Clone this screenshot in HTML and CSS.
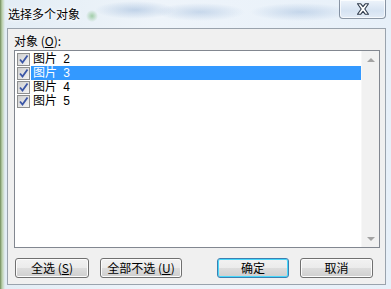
FILE: index.html
```html
<!DOCTYPE html>
<html lang="zh-CN">
<head>
  <meta charset="UTF-8">
  <title>选择多个对象</title>
  <link rel="stylesheet" href="styles.css">
</head>
<body>
  <div class="window">
    <div class="titlebar">
      <span class="title">选择多个对象</span>
      <button class="close-button">
        <svg width="14" height="12" viewBox="0 0 14 12">
          <path d="M1.5 0.8 H4.8 L7 3.6 L9.2 0.8 H12.5 L8.8 6 L12.5 11.2 H9.2 L7 8.4 L4.8 11.2 H1.5 L5.2 6 Z" fill="#fff" stroke="#2f3b4c" stroke-width="1.1" stroke-linejoin="round"/>
        </svg>
      </button>
    </div>

    <div class="client">
      <div class="field-label">对象 (<u>O</u>):</div>

      <div class="listbox">
        <ul class="items">
          <li class="item">
            <span class="check"></span>
            <span class="item-text">图片 2</span>
          </li>
          <li class="item selected">
            <span class="check"></span>
            <span class="item-text">图片 3</span>
          </li>
          <li class="item">
            <span class="check"></span>
            <span class="item-text">图片 4</span>
          </li>
          <li class="item">
            <span class="check"></span>
            <span class="item-text">图片 5</span>
          </li>
        </ul>
        <div class="scrollbar">
          <span class="arrow arrow-up"></span>
          <span class="arrow arrow-down"></span>
        </div>
      </div>

      <div class="buttons">
        <div class="button-group">
          <button class="btn btn-all">全选 (<u>S</u>)</button>
          <button class="btn btn-none">全部不选 (<u>U</u>)</button>
        </div>
        <div class="button-group">
          <button class="btn btn-ok default">确定</button>
          <button class="btn btn-cancel">取消</button>
        </div>
      </div>
    </div>
  </div>
</body>
</html>
```

FILE: styles.css
```css
body {
  margin: 0;
  padding: 0;
  font-family: "Noto Sans CJK SC", "Liberation Sans", sans-serif;
  font-size: 12px;
  color: #000;
}

.window {
  width: 391px;
  height: 289px;
  box-sizing: border-box;
  display: flex;
  flex-direction: column;
  background:
    radial-gradient(ellipse 40px 9px at 135px 10px, rgba(110, 150, 200, 0.35), transparent),
    radial-gradient(ellipse 45px 9px at 200px 12px, rgba(110, 150, 200, 0.3), transparent),
    radial-gradient(ellipse 50px 9px at 300px 12px, rgba(110, 150, 200, 0.3), transparent),
    radial-gradient(ellipse 6px 6px at 92px 16px, rgba(90, 170, 90, 0.5), transparent),
    linear-gradient(to right, #6f8a5a 0, #b9cfa9 2px, #e3edf5 5px, #eef4fa 40%, #e7f0f9 100%);
}

.titlebar {
  height: 28px;
  display: flex;
  justify-content: space-between;
  align-items: flex-start;
}

.title {
  padding: 6px 0 0 8px;
  line-height: 16px;
  text-shadow: 0 0 6px #fff, 0 0 3px #fff;
}

.close-button {
  width: 47px;
  height: 19px;
  margin: 0 5px 0 0;
  padding: 0;
  border: 1px solid rgba(60, 75, 95, 0.55);
  border-top: none;
  border-radius: 0 0 4px 4px;
  background: linear-gradient(#eef4fb, #d6e3f2 60%, #e3ecf7);
  box-shadow: inset 0 0 0 1px rgba(255, 255, 255, 0.7);
  display: flex;
  align-items: center;
  justify-content: center;
}

.client {
  margin: 0 5px 4px 7px;
  height: 257px;
  box-sizing: border-box;
  border: 1px solid #9aa3ad;
  background: #f0f0f0;
  padding: 0 5px 6px 6px;
  display: flex;
  flex-direction: column;
}

.field-label {
  padding-top: 4px;
  line-height: 15px;
  height: 15px;
  margin-bottom: 2px;
}

.listbox {
  height: 199px;
  box-sizing: border-box;
  border: 1px solid #828790;
  background: #fff;
  display: flex;
}

.items {
  flex-grow: 1;
  list-style: none;
  margin: 0;
  padding: 1px 0 0 0;
  font-family: "Liberation Sans", "Noto Sans CJK SC", sans-serif;
}

.item {
  height: 14px;
  display: flex;
  align-items: center;
}

.check {
  width: 11px;
  height: 11px;
  margin-left: 2px;
  border: 1px solid #8e8f8f;
  background:
    url("data:image/svg+xml;utf8,<svg xmlns='http://www.w3.org/2000/svg' width='11' height='11'><path d='M2 5.5 L4.5 8.5 L9.5 1.5' fill='none' stroke='%233b56a6' stroke-width='1.8'/></svg>") center no-repeat,
    linear-gradient(135deg, #cfcfcf, #f4f4f4);
  flex-shrink: 0;
}

.item-text {
  flex-grow: 1;
  height: 14px;
  line-height: 14px;
  margin-left: 1px;
  padding-left: 2px;
  word-spacing: 3px;
}

.selected .item-text {
  background: #3399ff;
  color: #fff;
}

.scrollbar {
  width: 17px;
  flex-shrink: 0;
  background: #f1f1f1;
  border-left: 1px solid #f7f7f7;
  display: flex;
  flex-direction: column;
  justify-content: space-between;
  align-items: center;
  padding: 7px 0 6px 0;
}

.arrow {
  width: 0;
  height: 0;
  border-left: 4px solid transparent;
  border-right: 4px solid transparent;
}

.arrow-up {
  border-bottom: 4px solid #a3a3a3;
}

.arrow-down {
  border-top: 4px solid #a3a3a3;
}

.buttons {
  margin-top: 10px;
  padding: 0 7px 0 1px;
  display: flex;
  justify-content: space-between;
}

.button-group {
  display: flex;
  gap: 11px;
}

.btn {
  height: 20px;
  padding: 0;
  font-family: inherit;
  font-size: 12px;
  line-height: 16px;
  color: #000;
  border: 1px solid #707070;
  border-radius: 3px;
  background: linear-gradient(#f2f2f2 0, #ebebeb 50%, #dddddd 50%, #cfcfcf 100%);
  box-shadow: inset 0 0 0 1px #fcfcfc;
}

.btn-all {
  width: 74px;
}

.btn-none {
  width: 82px;
}

.btn-ok {
  width: 72px;
}

.btn-cancel {
  width: 73px;
}

.default {
  border-color: #3c7fb1;
  box-shadow: inset 0 0 0 1px #48d8fb;
}
```
